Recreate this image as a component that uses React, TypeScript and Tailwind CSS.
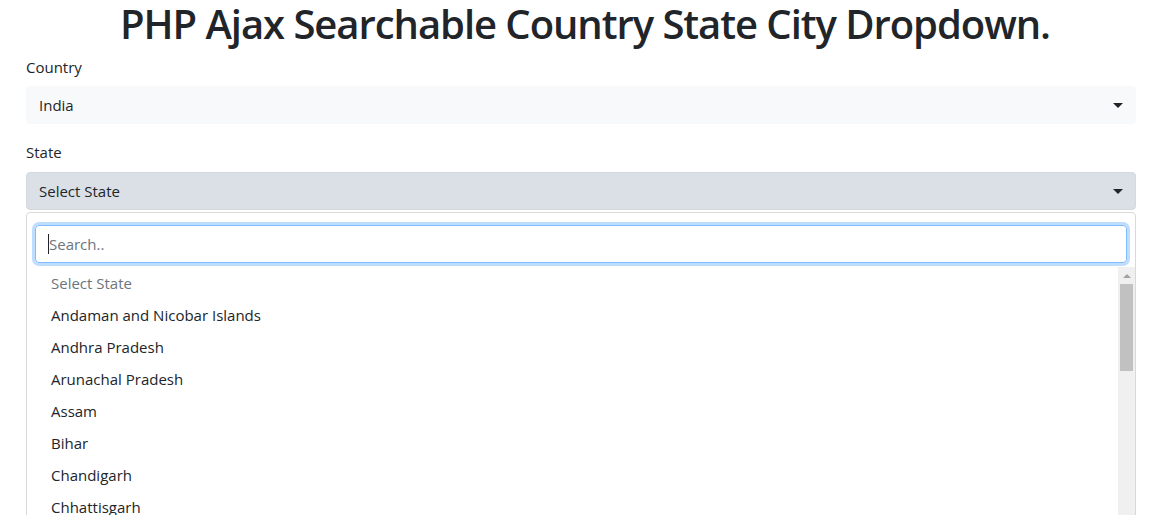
const states = [
  'Andaman and Nicobar Islands',
  'Andhra Pradesh',
  'Arunachal Pradesh',
  'Assam',
  'Bihar',
  'Chandigarh',
  'Chhattisgarh',
  'Dadra and Nagar Haveli',
];

const Caret = () => (
  <span className="w-0 h-0 border-x-[5px] border-x-transparent border-t-[5px] border-t-[#212529]" />
);

const App = () => {
  return (
    <div
      className="h-[515px] overflow-hidden bg-white text-[#212529]"
      style={{ fontFamily: '"Open Sans", "Noto Sans", sans-serif' }}
    >
      <h1 className="text-center text-[40px] leading-[48px] font-semibold tracking-[-1.05px]">
        PHP Ajax Searchable Country State City Dropdown.
      </h1>

      <div className="ml-[26px] w-[1110px] pt-[7px]">
        {/* Country */}
        <div className="mb-4">
          <label className="block text-[15px] leading-6 mb-[7px]">Country</label>
          <div className="h-[38px] rounded bg-[#f8f9fa] flex items-center justify-between pl-[13px] pr-[13px]">
            <span className="text-[15px]">India</span>
            <Caret />
          </div>
        </div>

        {/* State */}
        <div>
          <label className="block text-[15px] leading-6 mb-2">State</label>
          <div className="h-[38px] rounded bg-[#dae0e5] border border-[#d3d9df] flex items-center justify-between pl-3 pr-3">
            <span className="text-[15px]">Select State</span>
            <Caret />
          </div>

          {/* Dropdown menu */}
          <div className="mt-0.5 border border-[#d9d9d9] rounded-t h-[400px] pt-3">
            <div className="px-2 pb-1">
              <div className="h-[38px] rounded border border-[#80bdff] shadow-[0_0_0_3px_rgba(0,123,255,0.25)] flex items-center pl-3">
                <span className="w-px h-[20px] bg-[#212529]" />
                <span className="text-[15px] text-[#6c757d]">Search..</span>
              </div>
            </div>
            <div className="flex">
              <div className="flex-1">
                <div className="h-8 flex items-center pl-6 text-[15px] text-[#6c757d]">Select State</div>
                {states.map((s) => (
                  <div key={s} className="h-8 flex items-center pl-6 text-[15px]">
                    {s}
                  </div>
                ))}
              </div>
              <div className="w-[17px] bg-[#f0f0f0] flex flex-col items-center">
                <div className="h-[17px] flex items-center justify-center">
                  <span className="w-0 h-0 border-x-[4px] border-x-transparent border-b-[4px] border-b-[#a3a3a3]" />
                </div>
                <div className="w-[13px] h-[87px] bg-[#c1c1c1]" />
              </div>
            </div>
          </div>
        </div>
      </div>
    </div>
  );
};

export default App;
